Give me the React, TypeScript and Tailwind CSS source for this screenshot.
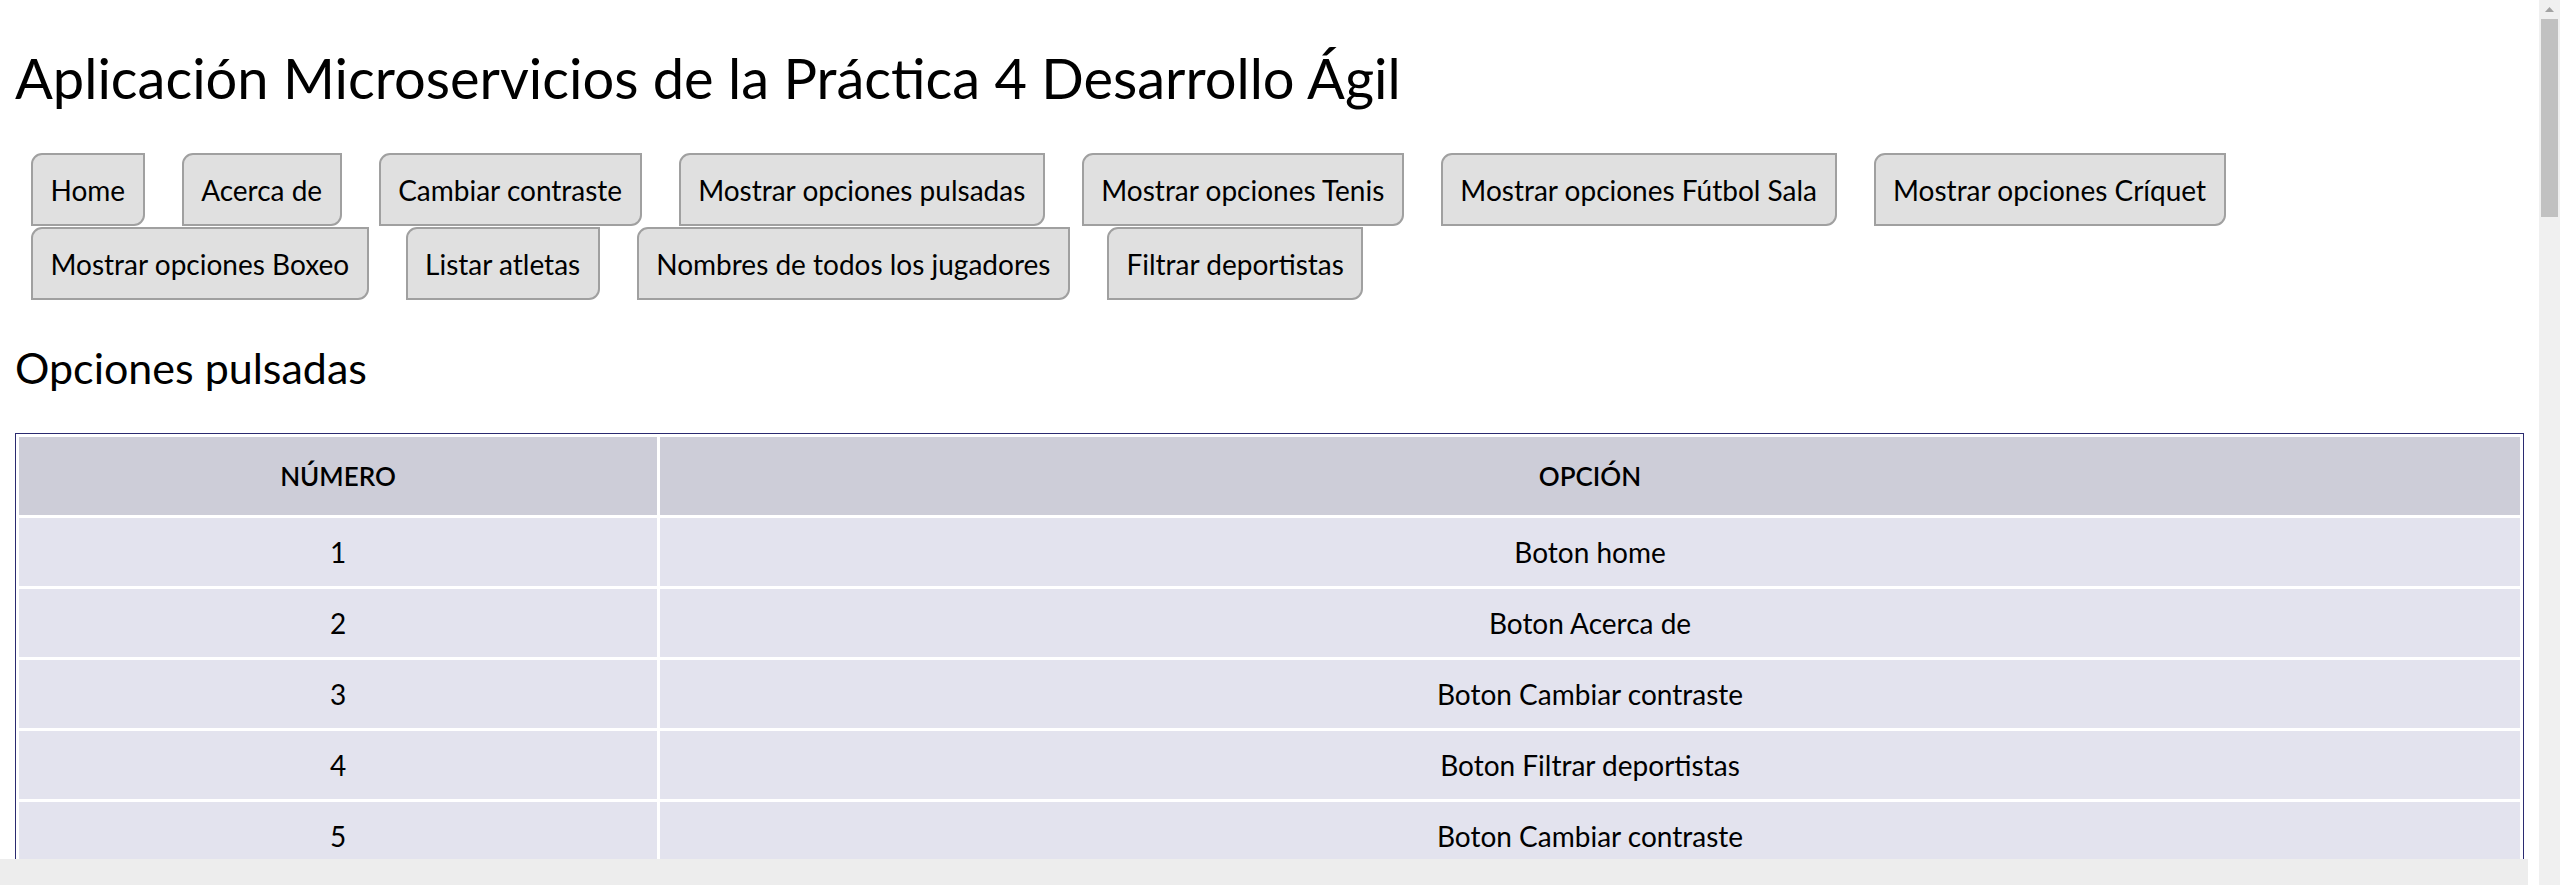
const botones1 = [
  "Home",
  "Acerca de",
  "Cambiar contraste",
  "Mostrar opciones pulsadas",
  "Mostrar opciones Tenis",
  "Mostrar opciones Fútbol Sala",
  "Mostrar opciones Críquet",
];

const botones2 = [
  "Mostrar opciones Boxeo",
  "Listar atletas",
  "Nombres de todos los jugadores",
  "Filtrar deportistas",
];

const opciones = [
  "Boton home",
  "Boton Acerca de",
  "Boton Cambiar contraste",
  "Boton Filtrar deportistas",
  "Boton Cambiar contraste",
];

function Boton({ texto }: { texto: string }) {
  return (
    <button className="shrink-0 rounded-tl-[11px] rounded-br-[11px] border-2 border-[#a0a0a0] bg-[#e0e0e0] px-[17.5px] py-[15.5px] text-[28px] leading-[38px] text-black">
      {texto}
    </button>
  );
}

function BarraScroll() {
  return (
    <div className="flex w-[21px] shrink-0 flex-col items-center bg-[#f0f0f0]">
      <div className="flex h-[19px] w-full items-center justify-center">
        <svg width="9" height="6" viewBox="0 0 9 6">
          <path d="M4.5 0 L9 5 L0 5 Z" fill="#a3a3a3" />
        </svg>
      </div>
      <div className="h-[198px] w-[17px] bg-[#c1c1c1]" />
    </div>
  );
}

export default function App() {
  return (
    <div className="flex h-screen overflow-hidden bg-white text-black font-['Source_Sans_Pro',Lato,sans-serif]">
      <div className="min-w-0 flex-1 overflow-hidden p-[15px]">
        <h1 className="mt-[25px] text-[56px] leading-[75px] font-normal">
          Aplicación Microservicios de la Práctica 4 Desarrollo Ágil
        </h1>

        <div className="mt-[38px] flex flex-col gap-px pl-[16px]">
          <div className="flex gap-[37px]">
            {botones1.map((b) => (
              <Boton key={b} texto={b} />
            ))}
          </div>
          <div className="flex gap-[37px]">
            {botones2.map((b) => (
              <Boton key={b} texto={b} />
            ))}
          </div>
        </div>

        <h2 className="mt-[39px] text-[43px] leading-[57px] font-normal">Opciones pulsadas</h2>

        <table className="mt-[37px] w-full border-separate border-spacing-[3px] border border-[#2b2b70] text-[28px] leading-[38px]">
          <thead>
            <tr>
              <th className="w-[638px] bg-[#cdcdd8] py-[20px] text-center text-[26px] font-semibold">NÚMERO</th>
              <th className="bg-[#cdcdd8] py-[20px] text-center text-[26px] font-semibold">OPCIÓN</th>
            </tr>
          </thead>
          <tbody>
            {opciones.map((o, i) => (
              <tr key={i}>
                <td className="bg-[#e3e3ee] py-[15px] text-center">{i + 1}</td>
                <td className="bg-[#e3e3ee] py-[15px] text-center">{o}</td>
              </tr>
            ))}
          </tbody>
        </table>
      </div>

      <BarraScroll />

      <div className="fixed bottom-0 left-0 h-[26px] w-[2528px] bg-[#ededed]" />
    </div>
  );
}
